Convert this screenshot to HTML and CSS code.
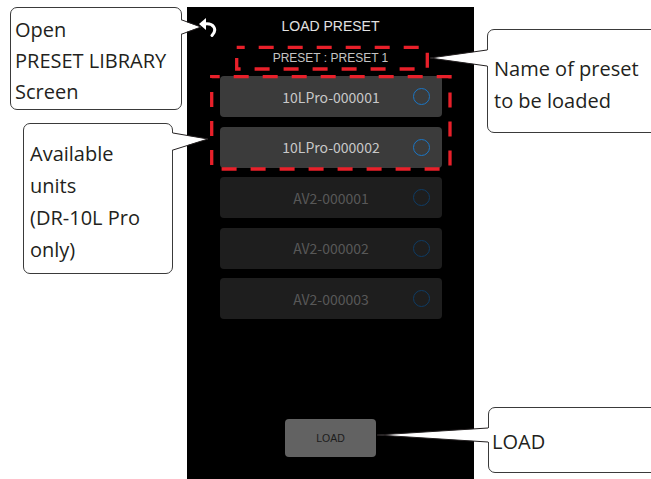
FILE: index.html
```html
<html>
<head>
	<title>LOAD PRESET</title>
<link rel="stylesheet" href="styles.css">
</head>
<body>
<div class="stage">

<div class="phone">
	<div class="topbar">
		<svg class="back" width="19" height="19" viewBox="0 0 19 19">
			<polygon points="0,6 7,0 7,12" fill="#fff"/>
			<path d="M6 6 C14 5, 19 11, 13 17.5" fill="none" stroke="#fff" stroke-width="3" stroke-linecap="round"/>
		</svg>
		<div class="title">LOAD PRESET</div>
	</div>
	<div class="preset-name">PRESET : PRESET 1</div>
	<div class="units">
		<div class="unit"><span class="unit-name">10LPro-000001</span><span class="radio"></span></div>
		<div class="unit"><span class="unit-name">10LPro-000002</span><span class="radio"></span></div>
		<div class="unit off"><span class="unit-name">AV2-000001</span><span class="radio"></span></div>
		<div class="unit off"><span class="unit-name">AV2-000002</span><span class="radio"></span></div>
		<div class="unit off"><span class="unit-name">AV2-000003</span><span class="radio"></span></div>
	</div>
	<div class="load">LOAD</div>

	<!-- red highlight frames -->
	<svg class="marks" width="287" height="472">
		<rect x="49.7" y="40.3" width="190.6" height="21.7" fill="none" stroke="#e8202a" stroke-width="3.3" stroke-dasharray="15 14" stroke-dashoffset="7"/>
		<rect x="24.7" y="69.7" width="238.3" height="92.3" fill="none" stroke="#e8202a" stroke-width="3.3" stroke-dasharray="15 14" stroke-dashoffset="7"/>
	</svg>
</div>

<!-- callouts -->
<div class="callout c-library">Open<br>PRESET LIBRARY<br>Screen</div>
<div class="callout c-units">Available<br>units<br>(DR-10L Pro<br>only)</div>
<div class="callout c-name">Name of preset<br>to be loaded</div>
<div class="callout c-load">LOAD</div>

<svg class="pointers" width="651" height="479">
	<polygon points="180.5,20 201,27 180.5,34" fill="#fff"/>
	<polyline points="182,20 201,27 182,34" fill="none" stroke="#231f20" stroke-width="1"/>

	<polygon points="171.5,133 208,139 171.5,150" fill="#fff"/>
	<polyline points="173,133 208,139 173,150" fill="none" stroke="#231f20" stroke-width="1"/>

	<polygon points="488.5,50 430,58 488.5,66" fill="#fff"/>
	<polyline points="487,50 430,58 487,66" fill="none" stroke="#231f20" stroke-width="1"/>

	<polygon points="489.5,428 377,435 489.5,442" fill="#fff"/>
	<polyline points="488,428 377,435 488,442" fill="none" stroke="#231f20" stroke-width="1"/>
</svg>

</div>
</body>
</html>
```

FILE: styles.css
```css
body {margin:0; background:#fff; font-family:"Open Sans", "Noto Sans", sans-serif;}
.stage {position:relative; width:651px; height:479px; overflow:hidden; padding-top:7px; box-sizing:border-box;}

/* device screen */
.phone {position:relative; margin-left:187px; width:287px; height:472px; background:#000; display:flex; flex-direction:column; font-family:"Liberation Sans", Arial, sans-serif;}
.topbar {height:38px; display:grid; grid-template-columns:40px 1fr 40px; align-items:center;}
.back {margin-left:12px; margin-top:2px;}
.title {text-align:center; color:#e2e2e2; font-size:14px;}
.preset-name {margin-top:1px; height:24px; line-height:24px; text-align:center; color:#c4c4c4; font-size:12px;}
.units {margin:6px 32px 0 33px; display:flex; flex-direction:column; gap:9.5px;}
.unit {height:41px; border-radius:4px; background:#3b3b3b; display:grid; grid-template-columns:1fr auto 1fr; align-items:center; padding-right:12px; padding-left:12px;}
.unit-name {grid-column:2; color:#c8c8c8; font-family:"Noto Sans CJK JP", "Noto Sans", sans-serif; font-size:14px;}
.radio {grid-column:3; justify-self:end; width:15px; height:15px; border:1.5px solid #1b76c4; border-radius:50%;}
.unit.off {background:#1e1e1e;}
.unit.off .unit-name {color:#585858;}
.unit.off .radio {border-color:#0f3c64;}
.load {margin:auto 0 22px 98px; width:91px; height:38px; line-height:38px; border-radius:4px; background:#626262; color:#1c1c1c; text-align:center; font-size:10.5px;}
.marks {position:absolute; left:0; top:0;}

/* annotation callouts */
.callout {position:absolute; background:#fff; border:1.2px solid #3a3a3a; border-radius:7px; color:#231f20; font-size:20px; line-height:32px; box-sizing:border-box;}
.c-library {left:10px; top:7px; width:172px; height:103px; padding:0 0 0 4px; line-height:31px; padding-top:6px;}
.c-units {left:23px; top:123px; width:150px; height:151px; padding:14px 0 0 6px;}
.c-name {left:487px; top:29px; width:180px; height:104px; padding:23px 0 0 6px;}
.c-load {left:488px; top:407px; width:180px; height:66px; padding:18px 0 0 3px;}
.pointers {position:absolute; left:0; top:0;}
```
